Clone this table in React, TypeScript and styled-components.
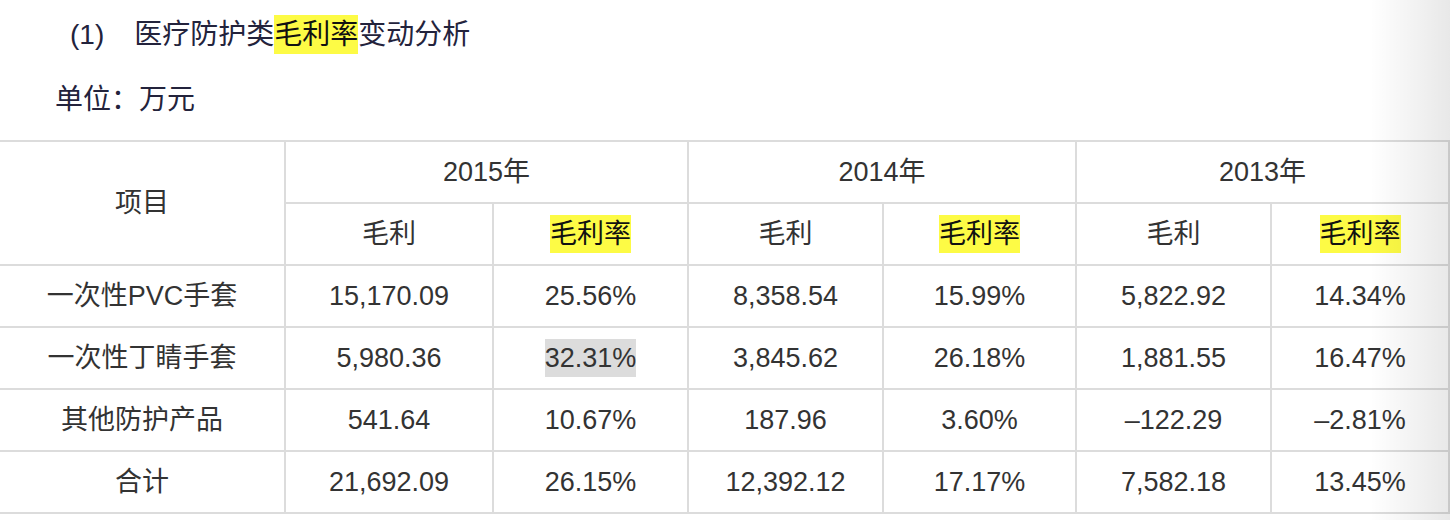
import styled, { createGlobalStyle } from "styled-components";

const GlobalStyle = createGlobalStyle`
  html, body {
    margin: 0;
    padding: 0;
    background: #fff;
  }
  body {
    font-family: "Liberation Sans", "Noto Sans CJK SC", sans-serif;
    color: #333;
    overflow: hidden;
  }
`;

const Page = styled.div`
  position: relative;
  width: 1450px;
  height: 520px;
  overflow: hidden;
`;

const Title = styled.h3`
  margin: 0;
  padding: 15px 0 0 70px;
  height: 40px;
  display: flex;
  align-items: center;
  gap: 30px;
  font-size: 28px;
  font-weight: normal;
  line-height: 40px;
  color: #23233c;
`;

const Unit = styled.p`
  margin: 0;
  padding: 25px 0 0 55px;
  height: 40px;
  font-size: 28px;
  line-height: 40px;
  color: #23233c;
`;

const Mark = styled.span<{ $tone?: "yellow" | "grey" }>`
  background: ${(p) => (p.$tone === "grey" ? "#dcdcdc" : "#fdfb45")};
  color: ${(p) => (p.$tone === "grey" ? "inherit" : "#111")};
  padding: 4px 0;
`;

const TableWrap = styled.div`
  margin-top: 20px;
  margin-left: -2px;
`;

const Table = styled.table`
  border-collapse: collapse;
  table-layout: fixed;
  width: 1450px;
  font-size: 27px;
  color: #333;
`;

const Cell = styled.td`
  border: 2px solid #dcdcdc;
  height: 60px;
  padding: 0;
  text-align: center;
  vertical-align: middle;
  white-space: nowrap;
  line-height: 30px;
`;

const Fade = styled.div`
  position: absolute;
  top: 0;
  right: 0;
  width: 80px;
  height: 100%;
  pointer-events: none;
  background: linear-gradient(to right, rgba(0, 0, 0, 0), rgba(0, 0, 0, 0.09));
`;

const widths = [286, 208, 195, 195, 193, 195, 178];

type Row = {
  name: string;
  values: string[];
};

const rows: Row[] = [
  {
    name: "一次性PVC手套",
    values: ["15,170.09", "25.56%", "8,358.54", "15.99%", "5,822.92", "14.34%"],
  },
  {
    name: "一次性丁睛手套",
    values: ["5,980.36", "32.31%", "3,845.62", "26.18%", "1,881.55", "16.47%"],
  },
  {
    name: "其他防护产品",
    values: ["541.64", "10.67%", "187.96", "3.60%", "–122.29", "–2.81%"],
  },
  {
    name: "合计",
    values: ["21,692.09", "26.15%", "12,392.12", "17.17%", "7,582.18", "13.45%"],
  },
];

const years = ["2015年", "2014年", "2013年"];

export default function App() {
  return (
    <Page>
      <GlobalStyle />
      <Title>
        <span>(1)</span>
        <span>
          医疗防护类<Mark>毛利率</Mark>变动分析
        </span>
      </Title>
      <Unit>单位：万元</Unit>
      <TableWrap>
        <Table>
          <colgroup>
            {widths.map((w, i) => (
              <col key={i} style={{ width: w }} />
            ))}
          </colgroup>
          <tbody>
            <tr>
              <Cell rowSpan={2}>项目</Cell>
              {years.map((y) => (
                <Cell key={y} colSpan={2}>
                  {y}
                </Cell>
              ))}
            </tr>
            <tr>
              {years.map((y) => [
                <Cell key={y + "a"}>毛利</Cell>,
                <Cell key={y + "b"}>
                  <Mark>毛利率</Mark>
                </Cell>,
              ])}
            </tr>
            {rows.map((r) => (
              <tr key={r.name}>
                <Cell>{r.name}</Cell>
                {r.values.map((v, i) => (
                  <Cell key={i}>
                    {r.name === "一次性丁睛手套" && i === 1 ? (
                      <Mark $tone="grey">{v}</Mark>
                    ) : (
                      v
                    )}
                  </Cell>
                ))}
              </tr>
            ))}
          </tbody>
        </Table>
      </TableWrap>
      <Fade />
    </Page>
  );
}
